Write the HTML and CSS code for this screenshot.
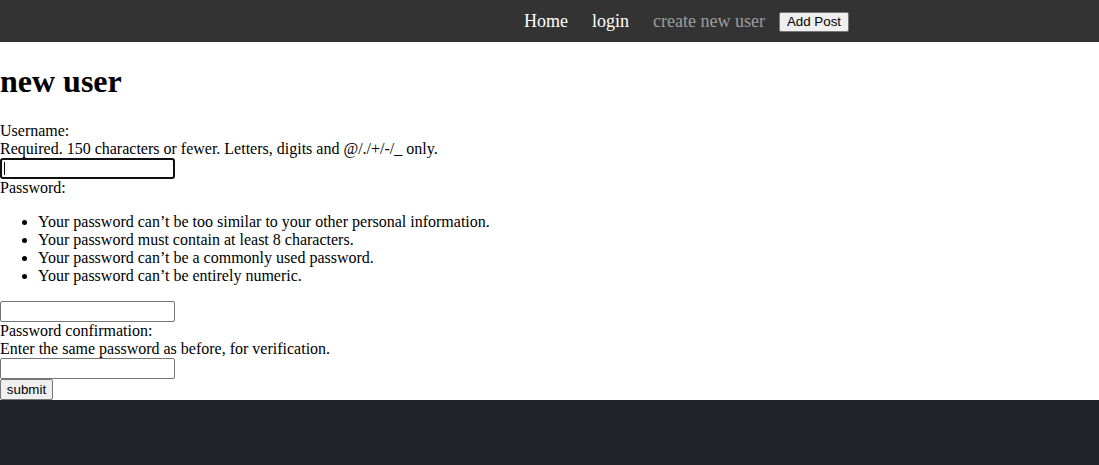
FILE: index.html
```html
<!DOCTYPE html>
<html>
<head>
<meta charset="utf-8">
<title>new user</title>
<link rel="stylesheet" href="styles.css">
</head>
<body>
<nav class="topnav">
  <a class="nav-link" href="#">Home</a>
  <a class="nav-link" href="#">login</a>
  <a class="nav-link muted" href="#">create new user</a>
  <button class="nav-btn" type="button">Add Post</button>
</nav>
<main class="content">
  <h1 class="title">new user</h1>
  <form class="form">
    <label class="line">Username:</label>
    <span class="line">Required. 150 characters or fewer. Letters, digits and @/./+/-/_ only.</span>
    <input class="field focused" type="text">
    <label class="line">Password:</label>
    <ul class="rules">
      <li>Your password can’t be too similar to your other personal information.</li>
      <li>Your password must contain at least 8 characters.</li>
      <li>Your password can’t be a commonly used password.</li>
      <li>Your password can’t be entirely numeric.</li>
    </ul>
    <input class="field" type="password">
    <label class="line">Password confirmation:</label>
    <span class="line">Enter the same password as before, for verification.</span>
    <input class="field" type="password">
    <button class="submit" type="submit">submit</button>
  </form>
</main>
<footer class="footer"></footer>
</body>
</html>
```
FILE: styles.css
```css
html, body {
  margin: 0;
  padding: 0;
  background: #fff;
}
body {
  font-family: "Liberation Serif", "Times New Roman", serif;
  font-size: 16px;
  color: #000;
}
.topnav {
  height: 42px;
  background: #333333;
  display: flex;
  align-items: center;
  justify-content: flex-end;
  padding-right: 250px;
  box-sizing: border-box;
}
.nav-link {
  font-size: 18px;
  color: #fff;
  text-decoration: none;
  margin-right: 24px;
  line-height: 20px;
  padding-bottom: 1px;
}
.nav-link.muted {
  color: #9d9d9d;
  margin-right: 14px;
}
.nav-btn {
  font-family: Arial, "Liberation Sans", sans-serif;
  font-size: 13.33px;
  height: 20px;
  width: 70px;
  padding: 0;
  background: #efefef;
  color: #000;
  border: 1px solid #767676;
  border-radius: 2px;
  margin-top: 1px;
}
.content {
  display: block;
}
.title {
  font-size: 32px;
  font-weight: bold;
  margin: 21px 0 22px;
  line-height: 37px;
}
.form {
  display: flex;
  flex-direction: column;
  align-items: flex-start;
}
.line {
  display: block;
  line-height: 18px;
}
.field {
  width: 175px;
  height: 21px;
  box-sizing: border-box;
  border: 1px solid #767676;
  border-radius: 2px;
  padding: 1px 2px;
  margin: 0;
  font-size: 13.33px;
  background: #fff;
}
.field.focused {
  border: 2px solid #101010;
  border-radius: 3px;
  background: linear-gradient(#000, #000) no-repeat 2px 2px / 1px 13px, #fff;
}
.rules {
  margin: 16px 0 16px;
  padding-left: 38px;
  line-height: 18px;
}
.submit {
  font-family: Arial, "Liberation Sans", sans-serif;
  font-size: 13.33px;
  height: 21px;
  width: 53px;
  padding: 0;
  background: #efefef;
  border: 1px solid #767676;
  border-radius: 2px;
  color: #000;
  margin: 0;
}
.footer {
  height: 65px;
  background: #212529;
}
```
